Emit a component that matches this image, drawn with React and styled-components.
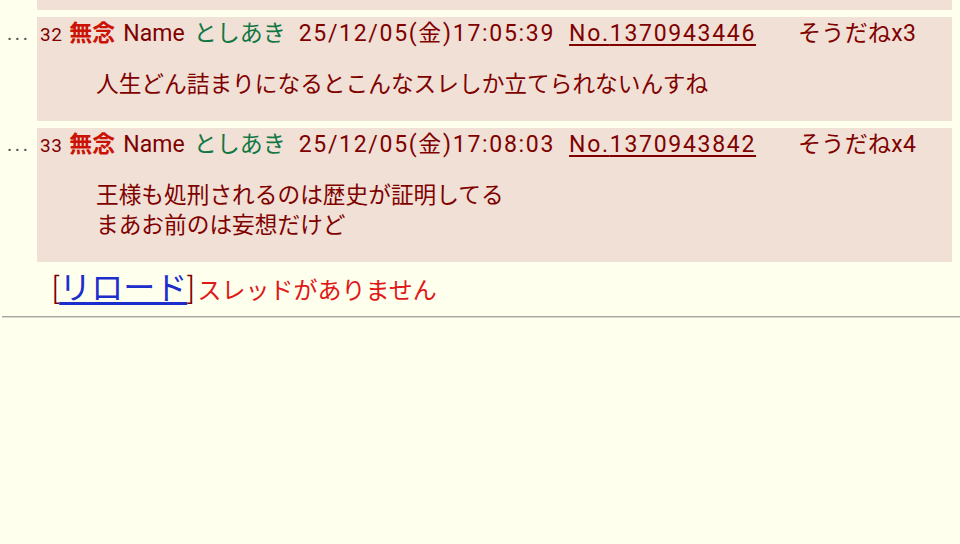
import React from 'react';
import styled, { createGlobalStyle } from 'styled-components';

const GlobalStyle = createGlobalStyle`
  html, body {
    margin: 0;
    background: #ffffee;
    overflow: hidden;
  }
  body {
    font-family: Roboto, "Noto Sans CJK JP", sans-serif;
    color: #800000;
  }
`;

const posts = [
  {
    num: 32,
    date: '25/12/05(金)17:05:39',
    no: '1370943446',
    sodane: 3,
    lines: ['人生どん詰まりになるとこんなスレしか立てられないんすね'],
  },
  {
    num: 33,
    date: '25/12/05(金)17:08:03',
    no: '1370943842',
    sodane: 4,
    lines: ['王様も処刑されるのは歴史が証明してる', 'まあお前のは妄想だけど'],
  },
];

const Thread = () => (
  <Page>
    <GlobalStyle />
    <Row>
      <Dots />
      <Tail />
    </Row>
    {posts.map(p => (
      <Row key={p.num}>
        <Dots>...</Dots>
        <Reply>
          <Header>
            <Num>{p.num}</Num>
            <Subject>無念</Subject>
            <Label>Name</Label>
            <Name>としあき</Name>
            <Stamp>{p.date}</Stamp>
            <PostNo href="#">No.{p.no}</PostNo>
            <Sodane>そうだねx{p.sodane}</Sodane>
          </Header>
          <Body>
            {p.lines.map((l, i) => (
              <div key={i}>{l}</div>
            ))}
          </Body>
        </Reply>
      </Row>
    ))}
    <Footer>
      <Bracket>[</Bracket>
      <Reload href="#">リロード</Reload>
      <Bracket>]</Bracket>
      <Notice>スレッドがありません</Notice>
    </Footer>
    <Rule />
  </Page>
);

export default Thread;

const Page = styled.div`
  display: flex;
  flex-direction: column;
  gap: 7px;
  width: 960px;
`;

const Row = styled.div`
  display: flex;
  align-items: flex-start;
`;

const Dots = styled.div`
  width: 30px;
  padding-left: 7px;
  font-size: 20px;
  letter-spacing: 2.6px;
  line-height: 32px;
  color: #555;
`;

const Tail = styled.div`
  width: 915px;
  height: 10px;
  background: #f0e0d6;
`;

const Reply = styled.div`
  width: 915px;
  padding: 1px 0;
  background: #f0e0d6;
`;

const Header = styled.div`
  display: flex;
  align-items: baseline;
  height: 32px;
  line-height: 32px;
  padding-left: 3px;
  font-size: 23px;
  white-space: nowrap;
`;

const Num = styled.span`
  font-size: 19px;
  letter-spacing: 0.5px;
`;

const Subject = styled.span`
  margin-left: 7px;
  color: #cc1105;
  font-weight: bold;
`;

const Label = styled.span`
  margin-left: 8px;
`;

const Name = styled.span`
  margin-left: 9px;
  color: #117743;
`;

const Stamp = styled.span`
  margin-left: 13px;
  letter-spacing: 1.7px;
`;

const PostNo = styled.a`
  margin-left: 14px;
  color: #800000;
  letter-spacing: 1.7px;
  text-decoration: underline;
  text-underline-offset: 3px;
`;

const Sodane = styled.span`
  margin-left: 42px;
  letter-spacing: 0.3px;
`;

const Body = styled.div`
  margin: 20px 0 20px 59px;
  font-size: 22.7px;
  line-height: 30px;
`;

const Footer = styled.div`
  display: flex;
  align-items: baseline;
  padding-left: 52px;
  margin-top: 1px;
  height: 36px;
  line-height: 36px;
  font-size: 24px;
`;

const Bracket = styled.span`
  font-size: 30px;
  font-weight: 300;
  color: #800000;
`;

const Reload = styled.a`
  font-size: 32px;
  color: #1c2ecc;
  text-decoration: underline;
  text-underline-offset: 3px;
`;

const Notice = styled.span`
  margin-left: 3px;
  color: #e01818;
`;

const Rule = styled.hr`
  margin: 3px 0 0 2px;
  border: none;
  border-top: 1px solid #a8a8a0;
  border-bottom: 1px solid #d8d8d0;
`;
